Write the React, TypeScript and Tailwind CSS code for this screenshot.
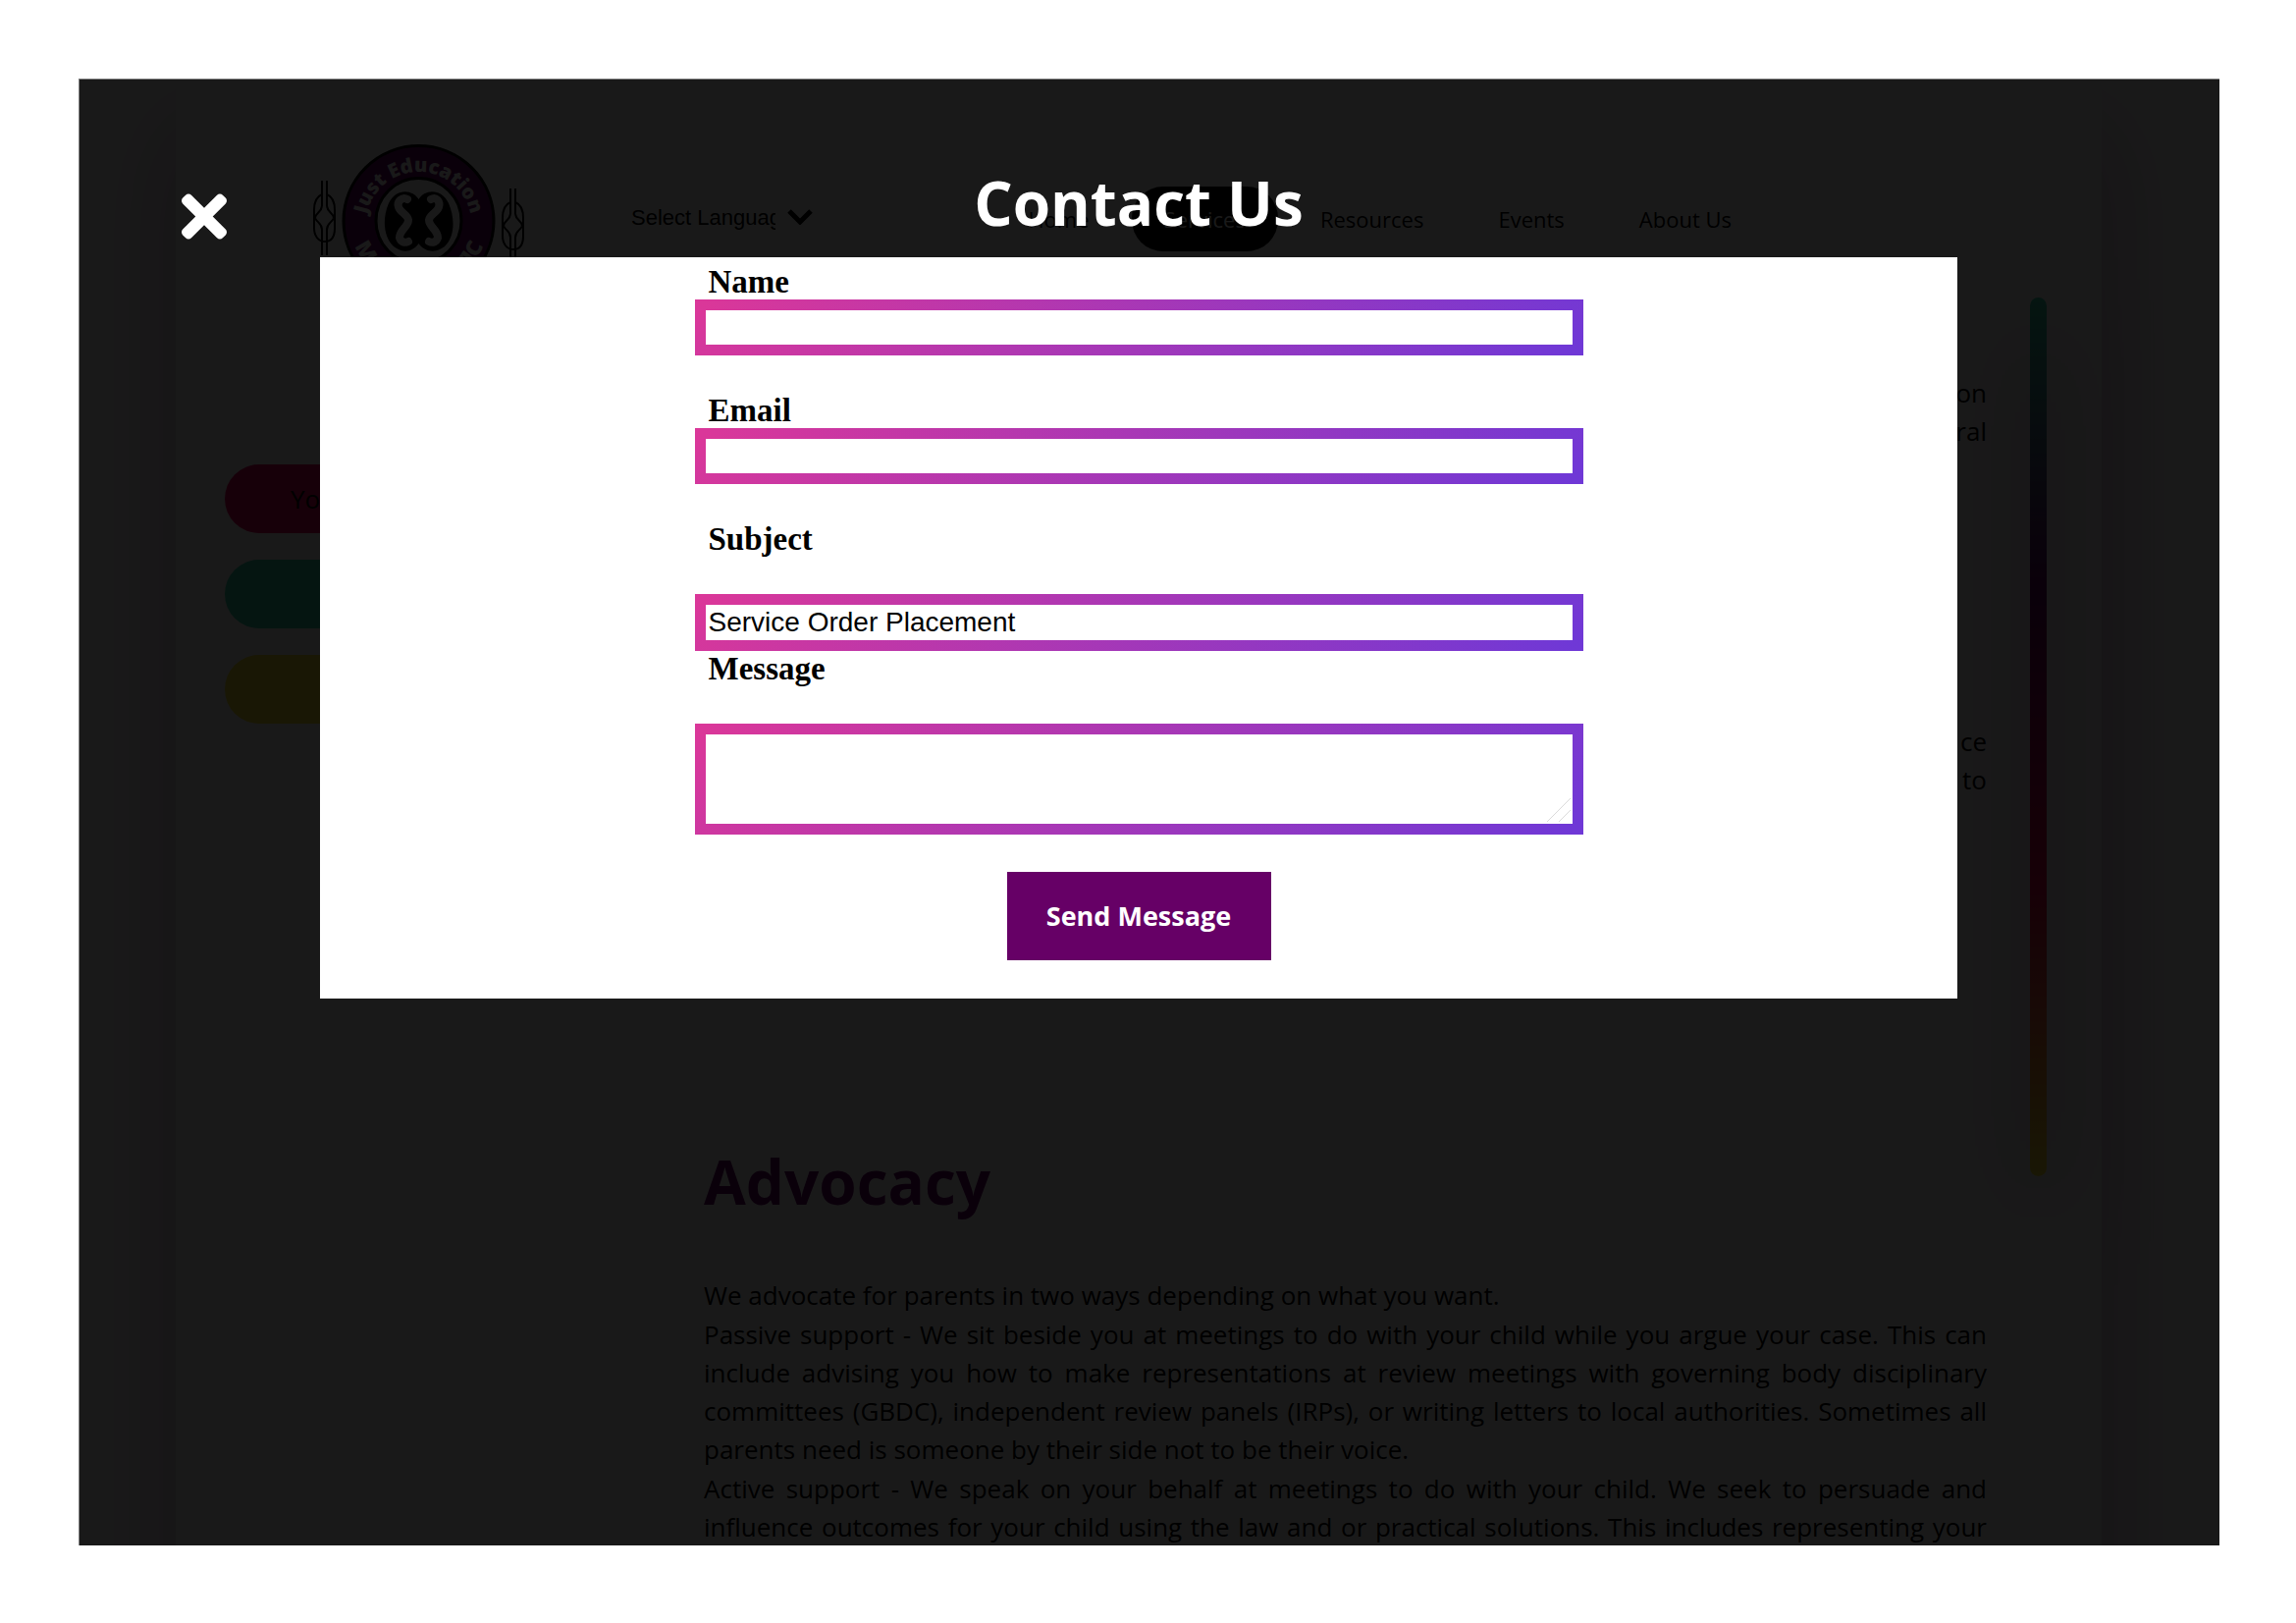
import React from "react";
import { FaTimes } from "react-icons/fa";

const navItems = ["Home", "Services", "Resources", "Events", "About Us"];

const fieldClass =
  "block w-full border-[11px] [border-image:linear-gradient(135deg,#da3799,#6f38d6)_1] bg-white px-[3px] font-['Liberation_Sans',sans-serif] text-[28px] text-black outline-none";

function Chain({ x, y }: { x: number; y: number }) {
  return (
    <g transform={`translate(${x} ${y})`} fill="none" stroke="#000" strokeWidth="2">
      <path d="M9 0V26M14 0V26M9 50V76M14 50V76" />
      <path d="M9 14C4 16 1 22 1 30V48C1 56 5 62 12 62S22 56 22 48V30C22 22 19 16 14 14" />
      <path d="M2 38C3 32 8 33 9 26M21 38C20 32 15 33 14 26M2 38C4 43 9 43 9 50M21 38C19 43 14 43 14 50" />
    </g>
  );
}

function Logo() {
  return (
    <svg viewBox="0 0 216 156" className="h-[156px] w-[216px] shrink-0" role="img" aria-label="Just Education">
      <defs>
        <path id="arcTop" d="M53.500 84A54 54 0 0 1 161.500 84" />
        <path id="arcBottom" d="M38 80A70 70 0 0 0 178 80" />
      </defs>
      <Chain x={0} y={39} />
      <Chain x={192} y={47} />
      <circle cx="107.500" cy="80" r="76.500" fill="#660066" stroke="#000" strokeWidth="3" />
      <circle cx="107.500" cy="80" r="43.500" fill="#fff" stroke="#000" strokeWidth="3" />
      <text fill="#fff" fontFamily="Open Sans, sans-serif" fontWeight="800" fontSize="20">
        <textPath href="#arcTop" startOffset="50%" textAnchor="middle">Just Education</textPath>
      </text>
      <text fill="#fff" fontFamily="Open Sans, sans-serif" fontWeight="800" fontSize="22">
        <textPath href="#arcBottom" startOffset="26">M</textPath>
      </text>
      <text fill="#fff" fontFamily="Open Sans, sans-serif" fontWeight="800" fontSize="22">
        <textPath href="#arcBottom" startOffset="194" textAnchor="end">TIC</textPath>
      </text>
      <path d="M107.500 58C101 47 84 47 77 62C70 78 72 97 82 106C92 114 102 111 107.500 103C113 111 124 114 134 106C144 97 145 78 138 62C131 47 114 47 107.500 58Z" fill="#000" />
      <path d="M96 58C91 55 85 60 87 66C89 72 96 73 97 79C97 86 88 89 88 97C89 101 93 103 97 101M120 58C125 55 130 60 128 66C126 72 119 73 118 79C118 86 127 89 127 97C126 101 122 103 118 101" fill="none" stroke="#fff" strokeWidth="8" strokeLinecap="round" />
    </svg>
  );
}

function SitePage() {
  return (
    <div className="mr-[22px] h-full">
      <div className="mx-[98px] h-[1800px] bg-white shadow-[0_50px_100px_rgba(102,0,102,0.3)]">
        <header className="flex items-center pt-16 pr-[344px] pl-[140px]">
          <Logo />
          <div className="mb-1 ml-[108px] flex items-center">
            <select
              aria-label="Select Language"
              className="w-[147px] appearance-none overflow-hidden bg-transparent font-['Liberation_Sans',sans-serif] text-[22px] whitespace-nowrap text-black"
            >
              <option>Select Language</option>
            </select>
            <svg viewBox="0 0 26 16" className="ml-3 h-4 w-[26px]" fill="none" stroke="#000" strokeWidth="5">
              <path d="M2 2L13 13L24 2" />
            </svg>
          </div>
          <nav className="ml-auto flex gap-2.5 text-[22px] leading-[66px]">
            {navItems.map((item) => (
              <a
                key={item}
                href="#"
                className={
                  item === "Services"
                    ? "rounded-[32px] bg-black px-[33px] text-white"
                    : "px-[33px] text-black"
                }
              >
                {item}
              </a>
            ))}
          </nav>
        </header>

        <div className="flex items-start pr-14 pl-[50px]">
          <div className="mt-[172px] flex w-[400px] shrink-0 flex-col gap-[27px] text-[26px] leading-[70px]">
            <button className="h-[70px] rounded-full bg-[#e6005c] pl-[67px] text-left">You</button>
            <button className="h-[70px] rounded-full bg-[#32d2aa]" aria-label="Support" />
            <button className="h-[70px] rounded-full bg-[#fae632]" aria-label="Training" />
          </div>
          <main className="ml-[88px] flex-1 text-[26px] leading-[39px] text-black">
            <p className="mt-20 text-right">
              on
              <br />
              ral
            </p>
            <p className="mt-[277px] text-right">
              ce
              <br />
              to
            </p>
            <h2 className="mt-[344px] text-[62px] leading-[90px] font-bold text-[#660066]">Advocacy</h2>
            <div className="mt-[52px] space-y-px text-justify">
              <p>We advocate for parents in two ways depending on what you want.</p>
              <p>
                Passive support - We sit beside you at meetings to do with your child while you argue your case.
                This can include advising you how to make representations at review meetings with governing body
                disciplinary committees (GBDC), independent review panels (IRPs), or writing letters to local
                authorities. Sometimes all parents need is someone by their side not to be their voice.
              </p>
              <p className="[text-align-last:justify]">
                Active support - We speak on your behalf at meetings to do with your child. We seek to persuade and
                influence outcomes for your child using the law and or practical solutions. This includes
                representing your
              </p>
            </div>
          </main>
          <div className="mt-0.5 ml-11 h-[895px] w-[17px] shrink-0 rounded-full bg-[linear-gradient(#32d2aa,#660066,#e60046,#fae632)] shadow-[0_35px_100px_rgba(102,0,102,0.6)]" />
        </div>
      </div>
    </div>
  );
}

function ContactDialog() {
  return (
    <div
      role="dialog"
      aria-labelledby="contact-title"
      className="absolute inset-0 flex flex-col items-center bg-black/90 pr-[22px]"
    >
      <button aria-label="Close" className="absolute top-[106px] left-[104px] text-white">
        <FaTimes className="h-[67px] w-[46px]" />
      </button>
      <h1 id="contact-title" className="pt-20 text-[62px] leading-[90px] font-bold text-white">
        Contact Us
      </h1>
      <div className="mt-[11px] flex w-full max-w-[1668px] justify-center bg-white">
        <form
          onSubmit={(e) => e.preventDefault()}
          className="flex w-[905px] flex-col gap-[38px] pt-[7px] pb-[39px] font-['Liberation_Serif',serif] text-[33px] leading-9 font-bold text-black"
        >
          <div>
            <label htmlFor="name" className="block pl-3.5">Name</label>
            <input id="name" type="text" className={`${fieldClass} h-[57px]`} />
          </div>
          <div>
            <label htmlFor="email" className="block pl-3.5">Email</label>
            <input id="email" type="email" className={`${fieldClass} h-[57px]`} />
          </div>
          <label htmlFor="subject" className="block pl-3.5">Subject</label>
          <div>
            <input
              id="subject"
              type="text"
              defaultValue="Service Order Placement"
              className={`${fieldClass} h-[58px] font-normal`}
            />
            <label htmlFor="message" className="block pl-3.5">Message</label>
          </div>
          <div className="relative">
            <textarea id="message" className={`${fieldClass} h-[113px] resize-none font-normal`} />
            <svg viewBox="0 0 26 26" className="absolute right-3 bottom-3 size-[26px]" stroke="#ccc" strokeWidth="0.7">
              <path d="M1 25L25 1M13 25L25 13" />
            </svg>
          </div>
          <button
            type="submit"
            className="h-[90px] w-[269px] self-center bg-[#660066] font-['Open_Sans',sans-serif] text-[27px] text-white"
          >
            Send Message
          </button>
        </form>
      </div>
    </div>
  );
}

export default function App() {
  return (
    <div className="bg-white pt-20 pr-[78px] pb-[79px] pl-20 font-['Open_Sans',sans-serif]">
      <div className="relative h-[calc(100vh-159px)] overflow-hidden border-t border-l border-[#808080] bg-white">
        <SitePage />
        <ContactDialog />
      </div>
    </div>
  );
}
